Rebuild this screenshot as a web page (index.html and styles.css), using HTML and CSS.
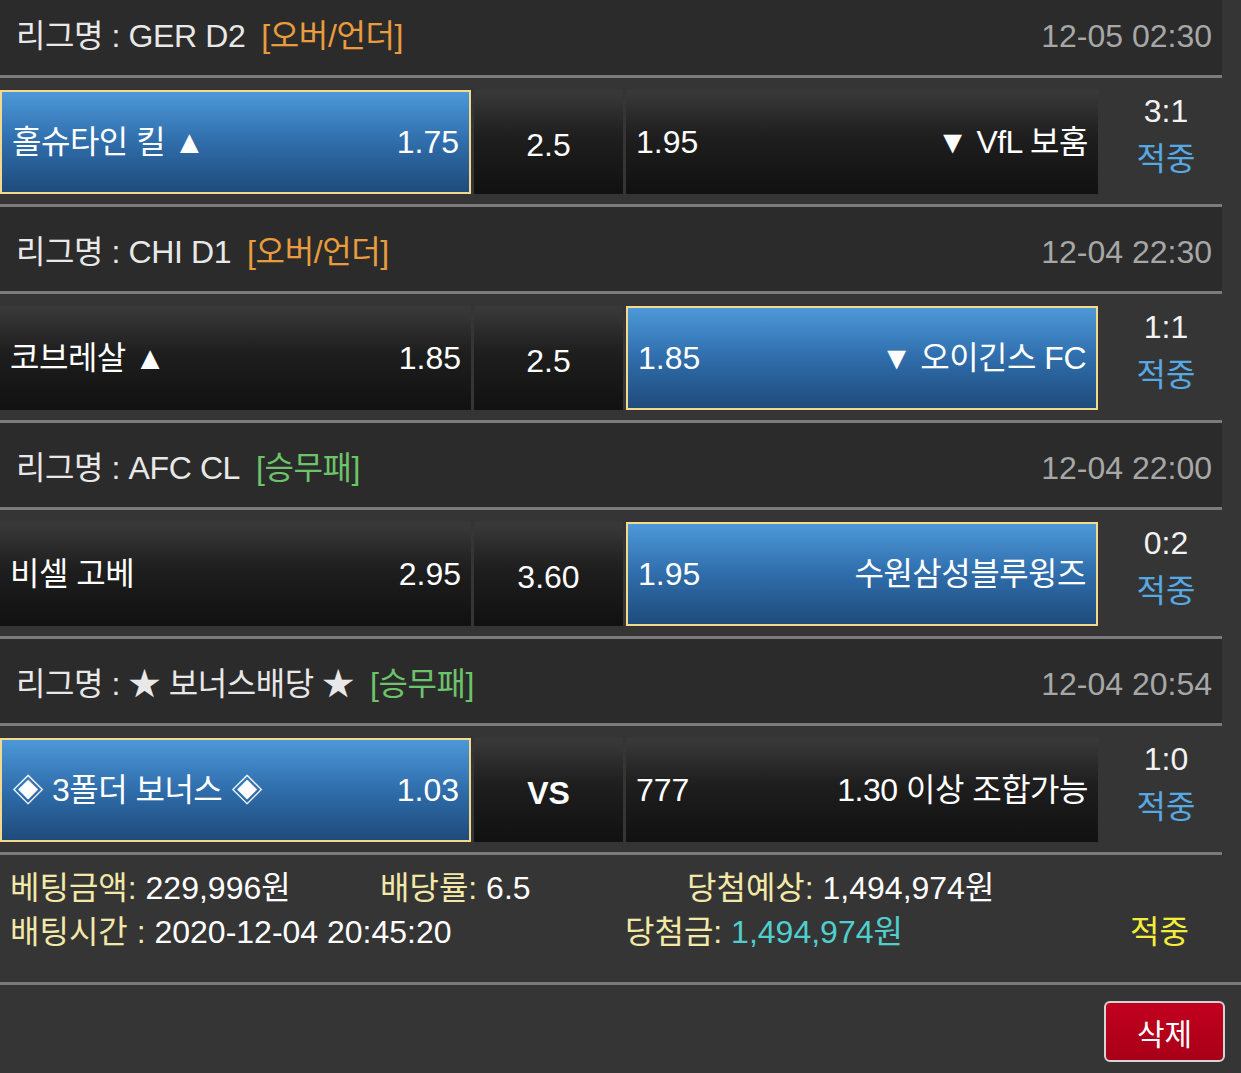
FILE: index.html
```html
<!DOCTYPE html>
<html lang="ko">
<head>
<meta charset="utf-8">
<title>베팅내역</title>
<link rel="stylesheet" href="styles.css">
</head>
<body>
<div class="list">
  <section class="league">
    <div class="lg-head"><span class="lg-name">리그명 : GER D2</span><span class="tag tag-ou">[오버/언더]</span><span class="lg-date">12-05 02:30</span></div>
    <div class="match">
      <div class="pick home sel"><span class="team">홀슈타인 킬 ▲</span><span class="odd">1.75</span></div>
      <div class="pick mid"><span>2.5</span></div>
      <div class="pick away"><span class="odd">1.95</span><span class="team">▼ VfL 보훔</span></div>
      <div class="result"><span class="score">3:1</span><span class="hit">적중</span></div>
    </div>
  </section>
  <section class="league">
    <div class="lg-head"><span class="lg-name">리그명 : CHI D1</span><span class="tag tag-ou">[오버/언더]</span><span class="lg-date">12-04 22:30</span></div>
    <div class="match">
      <div class="pick home"><span class="team">코브레살 ▲</span><span class="odd">1.85</span></div>
      <div class="pick mid"><span>2.5</span></div>
      <div class="pick away sel"><span class="odd">1.85</span><span class="team">▼ 오이긴스 FC</span></div>
      <div class="result"><span class="score">1:1</span><span class="hit">적중</span></div>
    </div>
  </section>
  <section class="league">
    <div class="lg-head"><span class="lg-name">리그명 : AFC CL</span><span class="tag tag-wdl">[승무패]</span><span class="lg-date">12-04 22:00</span></div>
    <div class="match">
      <div class="pick home"><span class="team">비셀 고베</span><span class="odd">2.95</span></div>
      <div class="pick mid"><span>3.60</span></div>
      <div class="pick away sel"><span class="odd">1.95</span><span class="team">수원삼성블루윙즈</span></div>
      <div class="result"><span class="score">0:2</span><span class="hit">적중</span></div>
    </div>
  </section>
  <section class="league">
    <div class="lg-head"><span class="lg-name">리그명 : ★ 보너스배당 ★</span><span class="tag tag-wdl">[승무패]</span><span class="lg-date">12-04 20:54</span></div>
    <div class="match">
      <div class="pick home sel"><span class="team">◈ 3폴더 보너스 ◈</span><span class="odd">1.03</span></div>
      <div class="pick mid"><span class="vs">VS</span></div>
      <div class="pick away"><span class="odd">777</span><span class="team">1.30 이상 조합가능</span></div>
      <div class="result"><span class="score">1:0</span><span class="hit">적중</span></div>
    </div>
  </section>
</div>
<div class="summary">
  <div class="sum-row">
    <span class="sum-a"><span class="lbl">베팅금액:</span> 229,996원</span>
    <span class="sum-b"><span class="lbl">배당률:</span> 6.5</span>
    <span class="sum-c"><span class="lbl">당첨예상:</span> 1,494,974원</span>
  </div>
  <div class="sum-row">
    <span class="sum-d"><span class="lbl">배팅시간 :</span> 2020-12-04 20:45:20</span>
    <span class="sum-e"><span class="lbl">당첨금:</span> <span class="win">1,494,974원</span></span>
    <span class="sum-f">적중</span>
  </div>
</div>
<div class="actions">
  <button class="btn-del" type="button">삭제</button>
</div>
</body>
</html>
```
FILE: styles.css
```css
html, body {
  margin: 0;
  padding: 0;
}
body {
  background: #353535;
  color: #ffffff;
  font-family: "Liberation Sans", "Noto Sans CJK KR", sans-serif;
  font-size: 32px;
  overflow: hidden;
}
.list {
  width: 1222px;
  margin-top: -9px;
}
.lg-head {
  height: 78px;
  padding: 6px 10px 0 16px;
  background: #2b2b2b;
  border-bottom: 3px solid #7b7b7b;
  display: flex;
  align-items: center;
  line-height: 40px;
}
.lg-name {
  color: #e8e8e8;
  letter-spacing: -0.4px;
}
.tag {
  margin-left: 16px;
  letter-spacing: -0.4px;
}
.tag-ou {
  color: #e99b3d;
}
.tag-wdl {
  color: #6cc36a;
}
.lg-date {
  margin-left: auto;
  color: #a7a7a7;
}
.match {
  height: 114px;
  padding-top: 12px;
  border-bottom: 3px solid #7b7b7b;
  display: flex;
  align-items: flex-start;
  gap: 3px;
}
.pick {
  box-sizing: border-box;
  height: 104px;
  padding: 0 10px;
  display: flex;
  align-items: center;
  justify-content: space-between;
  background: linear-gradient(#3a3a3a 0%, #1e1e1e 45%, #111111 100%);
  line-height: 40px;
  white-space: nowrap;
}
.team {
  letter-spacing: -0.5px;
}
.home {
  width: 471px;
}
.mid {
  width: 149px;
  justify-content: center;
  padding-top: 5px;
}
.away {
  width: 472px;
}
.sel {
  border: 2px solid #f2d98e;
  background: linear-gradient(#4d98d9 0%, #2f6dab 50%, #1f4b7b 100%);
}
.vs {
  font-weight: bold;
}
.result {
  width: 121px;
  padding-left: 9px;
  box-sizing: border-box;
  margin-top: -2px;
  display: flex;
  flex-direction: column;
  align-items: center;
  line-height: 46px;
}
.score {
  color: #f2f2f2;
}
.hit {
  color: #58a8e4;
  margin-top: 2px;
}
.summary {
  height: 116px;
  padding: 11px 0 0 10px;
  border-bottom: 3px solid #7b7b7b;
}
.sum-row {
  display: flex;
  height: 44px;
  align-items: center;
  line-height: 44px;
  white-space: nowrap;
}
.lbl {
  color: #f2e8a8;
}
.sum-a { width: 370px; }
.sum-b { width: 307px; }
.sum-d { width: 615px; }
.sum-e { width: 505px; }
.win {
  color: #4fcfcd;
}
.sum-f {
  color: #f3ee3b;
}
.actions {
  display: flex;
  justify-content: flex-end;
  padding: 16px 16px 0 0;
}
.btn-del {
  width: 121px;
  height: 61px;
  border: 2px solid #d4d4d4;
  border-radius: 6px;
  background: linear-gradient(#c2001f, #a80018);
  color: #ffffff;
  font-family: "Liberation Sans", "Noto Sans CJK KR", sans-serif;
  font-size: 30px;
  padding: 0;
}
```
